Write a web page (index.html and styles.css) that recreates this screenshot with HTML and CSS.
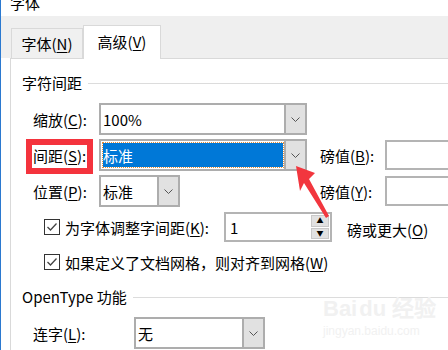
FILE: index.html
```html
<!DOCTYPE html>
<html lang="zh-CN">
<head>
    <meta charset="UTF-8">
    <title>字体</title>
    <link rel="stylesheet" href="styles.css">
</head>
<body>
    <div class="dlg">
        <div class="title"><span>字体</span></div>

        <div class="tabs">
            <div class="tab">字体(<u>N</u>)</div>
            <div class="tab active">高级(<u>V</u>)</div>
        </div>

        <div class="panel">
            <!-- 字符间距 -->
            <div class="group-head"><span>字符间距</span></div>

            <div class="grid">
                <div class="lbl">缩放(<u>C</u>):</div>
                <div class="combo wide">
                    <span class="val">100%</span>
                    <span class="drop"><svg width="9" height="5" viewBox="0 0 9 5"><path d="M0.5 0.5 L4.5 4.5 L8.5 0.5" fill="none" stroke="#555" stroke-width="1"/></svg></span>
                </div>
                <div></div><div></div><div></div>

                <div class="lbl marked">间距(<u>S</u>):</div>
                <div class="combo wide">
                    <span class="val"><span class="sel">标准</span></span>
                    <span class="drop"><svg width="9" height="5" viewBox="0 0 9 5"><path d="M0.5 0.5 L4.5 4.5 L8.5 0.5" fill="none" stroke="#555" stroke-width="1"/></svg></span>
                </div>
                <div></div>
                <div class="lbl">磅值(<u>B</u>):</div>
                <div class="input"></div>

                <div class="lbl">位置(<u>P</u>):</div>
                <div class="combo narrow">
                    <span class="val">标准</span>
                    <span class="drop"><svg width="9" height="5" viewBox="0 0 9 5"><path d="M0.5 0.5 L4.5 4.5 L8.5 0.5" fill="none" stroke="#555" stroke-width="1"/></svg></span>
                </div>
                <div></div>
                <div class="lbl">磅值(<u>Y</u>):</div>
                <div class="input"></div>
            </div>

            <div class="check-row first">
                <span class="box"><svg width="14" height="14" viewBox="0 0 14 14"><path d="M2.5 7 L5.5 10 L11.5 3.5" fill="none" stroke="#444" stroke-width="1.3"/></svg></span>
                <span class="check-text">为字体调整字间距(<u>K</u>):</span>
                <div class="spin">
                    <span class="val">1</span>
                    <span class="spin-btns">
                        <span class="up">▲</span>
                        <span class="down">▼</span>
                    </span>
                </div>
                <span class="after">磅或更大(<u>O</u>)</span>
            </div>

            <div class="check-row second">
                <span class="box"><svg width="14" height="14" viewBox="0 0 14 14"><path d="M2.5 7 L5.5 10 L11.5 3.5" fill="none" stroke="#444" stroke-width="1.3"/></svg></span>
                <span>如果定义了文档网格，则对齐到网格(<u>W</u>)</span>
            </div>

            <!-- OpenType 功能 -->
            <div class="group-head open"><span>OpenType 功能</span></div>

            <div class="liga-row">
                <div class="lbl short">连字(<u>L</u>):</div>
                <div class="combo liga">
                    <span class="val">无</span>
                    <span class="drop"><svg width="9" height="5" viewBox="0 0 9 5"><path d="M0.5 0.5 L4.5 4.5 L8.5 0.5" fill="none" stroke="#555" stroke-width="1"/></svg></span>
                </div>
            </div>
        </div>

        <div class="watermark">
            <div class="wm-logo">Bai<span class="du">du</span> 经验</div>
            <div class="wm-url">jingyan.baidu.com</div>
        </div>

        <svg class="arrow" width="448" height="350" viewBox="0 0 448 350">
            <polygon points="296,166 315,173 309,179 329,216 326,218 304,183 300,191" fill="#f2363e"/>
        </svg>
    </div>
</body>
</html>
```

FILE: styles.css
```css
body {
    margin: 0;
    background: #fff;
    font-family: "Noto Sans CJK SC", "Noto Sans", sans-serif;
    font-size: 15px;
    color: #000;
}

u {
    text-underline-offset: 2px;
}

.dlg {
    position: relative;
    width: 447px;
    height: 350px;
    overflow: hidden;
    border-left: 1px solid #2b79d0;
    background: #fff;
}

/* Title bar, cut off at the top */
.title {
    height: 21px;
    padding-left: 9px;
    line-height: 15px;
}

.title span {
    display: block;
    margin-top: -5px;
}

/* Tab strip */
.tabs {
    height: 42px;
    background: #efefef;
    padding-left: 10px;
    display: flex;
    align-items: flex-end;
}

.tab {
    width: 72px;
    height: 30px;
    box-sizing: border-box;
    border: 1px solid #d9d9d9;
    border-bottom: none;
    background: #f0f0f0;
    display: flex;
    align-items: center;
    justify-content: center;
    line-height: 1;
}

.tab.active {
    width: 78px;
    height: 34px;
    margin-bottom: -1px;
    background: #fff;
    position: relative;
    padding-bottom: 2px;
}

/* Page panel */
.panel {
    margin-left: 9px;
    border-left: 1px solid #d9d9d9;
    border-top: 1px solid #d9d9d9;
    padding: 16px 0 0 11px;
    height: 300px;
}

.group-head {
    display: flex;
    align-items: center;
    height: 16px;
    line-height: 16px;
}

.group-head span {
    padding-right: 6px;
}

.group-head::after {
    content: "";
    flex: 1;
    height: 1px;
    background: #dcdcdc;
}

.group-head.open {
    margin-top: 19px;
}

.grid {
    margin-top: 12px;
    padding-left: 11px;
    display: grid;
    grid-template-columns: 66px 208px 13px 65px 1fr;
    grid-auto-rows: 32px;
    row-gap: 4px;
    align-items: center;
}

.lbl {
    white-space: nowrap;
    line-height: 1;
}

.marked {
    position: relative;
}

.marked::after {
    content: "";
    position: absolute;
    left: -7px;
    top: -9px;
    width: 67px;
    height: 35px;
    border: 6px solid #f4333d;
    box-sizing: border-box;
}

/* Combo boxes */
.combo {
    height: 32px;
    box-sizing: border-box;
    border: 2px solid #adadad;
    display: flex;
    background: #fff;
}

.combo.wide {
    width: 208px;
}

.combo.narrow {
    width: 81px;
}

.combo .val {
    flex: 1;
    display: flex;
    align-items: center;
    padding-left: 2px;
    line-height: 1;
}

.sel {
    flex: 1;
    align-self: stretch;
    margin: 2px 1px 2px 0;
    background: #0078d7;
    color: #fff;
    outline: 1px dotted #e8903a;
    display: flex;
    align-items: center;
    padding-left: 0;
}

.drop {
    width: 19px;
    background: #e1e1e1;
    border-left: 2px solid #adadad;
    display: flex;
    align-items: center;
    justify-content: center;
}

.input {
    width: 80px;
    height: 30px;
    box-sizing: border-box;
    border: 2px solid #b4b4b4;
}

/* Checkbox rows */
.check-row {
    display: flex;
    align-items: center;
    padding-left: 22px;
    white-space: nowrap;
    line-height: 1;
}

.check-row.first {
    margin-top: 5px;
    height: 30px;
}

.check-row.second {
    margin-top: 12px;
    height: 16px;
}

.box {
    width: 16px;
    height: 16px;
    box-sizing: border-box;
    border: 1px solid #333;
    margin-right: 5px;
    display: flex;
    align-items: center;
    justify-content: center;
}

.check-text {
    width: 159px;
}

.spin {
    width: 108px;
    height: 30px;
    box-sizing: border-box;
    border: 2px solid #b4b4b4;
    display: flex;
}

.spin .val {
    flex: 1;
    padding-left: 4px;
    display: flex;
    align-items: center;
}

.spin-btns {
    width: 18px;
    display: flex;
    flex-direction: column;
    gap: 1px;
    padding: 1px;
}

.spin-btns span {
    flex: 1;
    background: #e1e1e1;
    border: 1px solid #c8c8c8;
    font-size: 7px;
    display: flex;
    align-items: center;
    justify-content: center;
}

.after {
    margin-left: 15px;
    margin-top: 4px;
}

/* Ligature row */
.liga-row {
    display: flex;
    align-items: center;
    margin-top: 12px;
    padding-left: 11px;
}

.lbl.short {
    width: 101px;
}

.combo.liga {
    width: 131px;
}

/* Watermark */
.watermark {
    position: absolute;
    left: 322px;
    top: 298px;
    color: #f1f1f1;
    font-family: "Liberation Sans", sans-serif;
    line-height: 1;
}

.wm-logo {
    font-size: 22px;
    font-weight: bold;
}

.wm-logo .du {
    margin-left: 2px;
}

.wm-url {
    font-size: 12px;
    margin-top: 5px;
}

.arrow {
    position: absolute;
    left: -1px;
    top: 0;
    pointer-events: none;
}
```
